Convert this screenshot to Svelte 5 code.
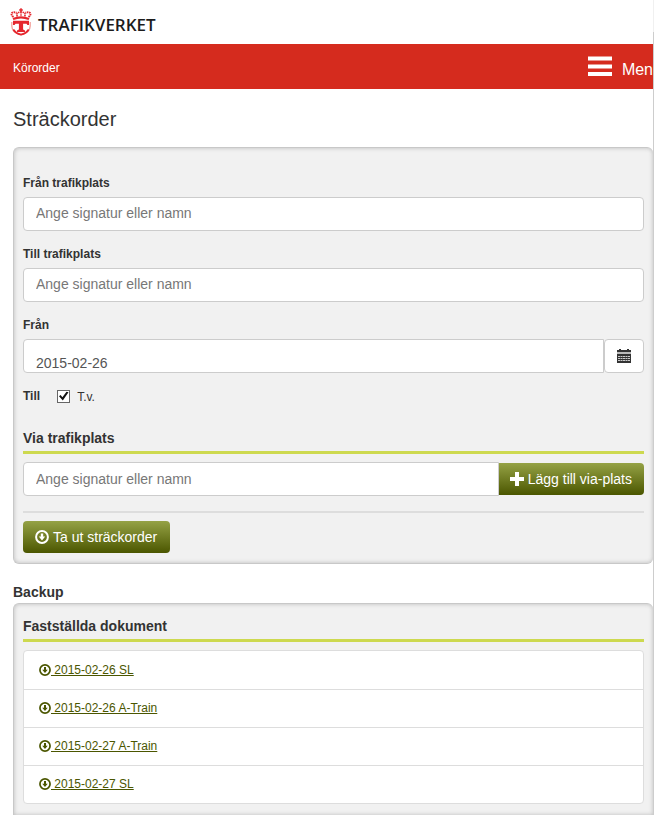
<script>
  let from = $state('');
  let to = $state('');
  let via = $state('');
  let date = $state('2015-02-26');
  let untilFurther = $state(true);
  const documents = ['2015-02-26 SL', '2015-02-26 A-Train', '2015-02-27 A-Train', '2015-02-27 SL'];
</script>

{#snippet download()}
  <svg class="download" viewBox="0 0 14 14" aria-hidden="true">
    <circle cx="7" cy="7" r="5.9" fill="none" stroke="currentColor" stroke-width="2" />
    <path d="M5.800 3.600h2.400v3h2L7 10.400 3.800 6.600h2z" fill="currentColor" />
  </svg>
{/snippet}

<div class="shell">
  <div class="page">
    <header>
      <svg class="crest" viewBox="0 0 22 28" aria-hidden="true">
        <g fill="none" stroke="#e5262d">
          <path d="M3.500 9C-.5 6 2 3 6.500 4.800M18.500 9C22.500 6 20 3 15.500 4.800" stroke-width="1.900" stroke-dasharray="1.600 .6" />
          <path d="M7.500 8.500C5.500 5.500 8 4 11 4s5.500 1.500 3.500 4.500M11 4v4.500" stroke-width="1.500" stroke-dasharray="1.600 .6" />
          <path d="M11 .3v3.400M9.200 1.900h3.600" stroke-width="1.500" />
          <path d="M3 11Q11 7.600 19 11" stroke-width="2.200" />
          <path d="M1.800 14v4c0 4.500 3.700 7.300 9.200 8.700 5.500-1.400 9.200-4.200 9.200-8.700v-4" stroke="#f4a09a" stroke-width="1.300" />
          <path d="M3.300 21.500q2.300 3.800 7.700 5.100 5.400-1.300 7.700-5.100" stroke-width="1.800" />
        </g>
        <path d="M3 12.800h16v4.200h-1.600l-.9-1.200h-3.400v5.800l1.900 1v1.500H7v-1.500l1.900-1v-5.800H5.500l-.9 1.200H3z" fill="#e5262d" />
      </svg>
      <span class="brand">TRAFIKVERKET</span>
    </header>

    <nav>
      <a href="#top">Körorder</a>
      <button type="button" class="menu">
        <svg viewBox="0 0 24 20" aria-hidden="true">
          <path d="M0 2.500h24M0 10.500h24M0 18h24" stroke="#fff" stroke-width="4" />
        </svg>
        <span>Men</span>
      </button>
    </nav>

    <main>
      <h1>Sträckorder</h1>
      <form class="panel" onsubmit={(e) => e.preventDefault()}>
        <label class="caption" for="from">Från trafikplats</label>
        <input class="field" id="from" type="text" placeholder="Ange signatur eller namn" bind:value={from} />

        <label class="caption" for="to">Till trafikplats</label>
        <input class="field" id="to" type="text" placeholder="Ange signatur eller namn" bind:value={to} />

        <label class="caption" for="date">Från</label>
        <div class="group">
          <input class="field date" id="date" type="text" bind:value={date} />
          <button type="button" class="calendar" aria-label="Kalender">
            <svg viewBox="0 0 14 14" aria-hidden="true">
              <path d="M0 1h2V0h2v1h6V0h2v1h2v2H0zM0 5h14v9H0z" fill="#333" />
              <path d="M0 4h14" stroke="#bbb" stroke-width="2" />
              <path d="M1 7.500h12M1 9.500h12M1 11.500h12" stroke="#ccc" stroke-dasharray="2 .5" />
            </svg>
          </button>
        </div>

        <div class="until">
          <span class="till">Till</span>
          <label>
            <span class="box">
              <input type="checkbox" bind:checked={untilFurther} />
              <svg viewBox="0 0 13 13" aria-hidden="true">
                <path d="M2 6.200 3.600 5 5.400 7.200 9.500 1.800 11.500 2.300 5.800 10.600z" fill="#111" />
              </svg>
            </span>
            <span>T.v.</span>
          </label>
        </div>

        <h2><label for="via">Via trafikplats</label></h2>
        <div class="group">
          <input class="field" id="via" type="text" placeholder="Ange signatur eller namn" bind:value={via} />
          <button type="button" class="green add">
            <svg class="plus" viewBox="0 0 14 14" aria-hidden="true">
              <path d="M5 0h4v5h5v4H9v5H5V9H0V5h5z" fill="#fff" />
            </svg>
            Lägg till via-plats
          </button>
        </div>
        <hr />
        <button type="submit" class="green">{@render download()} Ta ut sträckorder</button>
      </form>

      <h3>Backup</h3>
      <section class="panel backup">
        <h2>Fastställda dokument</h2>
        <ul>
          {#each documents as name}
            <li><a href="#document">{@render download()}<span>&nbsp;{name}</span></a></li>
          {/each}
        </ul>
      </section>
    </main>
  </div>
  <div class="track"></div>
</div>

<style>
  .shell,
  .shell * {
    box-sizing: border-box;
  }
  .shell {
    display: grid;
    grid-template-columns: 1fr 1px;
    height: 100vh;
    overflow: hidden;
    background: #fff;
    color: #333;
    font: 12px/20px 'Liberation Sans', Arial, sans-serif;
  }
  .page {
    display: flex;
    flex-direction: column;
    min-width: 0;
    min-height: 100vh;
  }
  .track {
    border-top: 32px solid #f0f0f0;
    background: #cdcdcd;
  }
  header {
    display: flex;
    align-items: center;
    gap: 6px;
    height: 44px;
    padding: 0 10px;
  }
  .crest {
    width: 22px;
    height: 28px;
  }
  .brand {
    padding-top: 6px;
    color: #1c1c1c;
    font: 600 17px/20px 'Open Sans', 'Noto Sans', sans-serif;
  }
  nav {
    display: flex;
    align-items: center;
    justify-content: space-between;
    height: 45px;
    padding-left: 13px;
    background: #d52b1e;
  }
  nav a {
    padding-top: 3px;
    color: #fff;
    text-decoration: none;
  }
  button,
  input {
    font: 14px/20px 'Liberation Sans', Arial, sans-serif;
  }
  button {
    cursor: pointer;
  }
  .menu {
    display: flex;
    gap: 10px;
    padding: 2px 0 0;
    border: 0;
    background: none;
    color: #fff;
    font-size: 16px;
  }
  .menu svg {
    width: 24px;
    height: 20px;
  }
  .menu span {
    padding-top: 4px;
  }
  main {
    display: flex;
    flex: 1;
    flex-direction: column;
    padding-left: 13px;
  }
  h1 {
    margin: 18px 0 16px;
    font-size: 20px;
    font-weight: 400;
    line-height: 24px;
  }
  .panel {
    padding: 26px 9px 10px;
    border: 1px solid #c8c8c8;
    border-right-width: 0;
    border-radius: 6px;
    background: #f1f1f1;
    box-shadow: inset 0 0 4px #bbb;
  }
  .caption {
    display: block;
    font-weight: 700;
    line-height: 18px;
    margin-bottom: 5px;
  }
  .field {
    display: block;
    width: 100%;
    min-width: 0;
    height: 34px;
    margin: 0 0 14px;
    padding: 5px 12px 7px;
    border: 1px solid #ccc;
    border-radius: 4px;
    outline: none;
    background: #fff;
    color: #555;
  }
  .field::placeholder {
    color: #777;
    opacity: 1;
  }
  .group {
    display: flex;
    align-items: center;
  }
  .group .field {
    flex: 1;
    margin: 0;
    padding: 6px 12px;
    border-radius: 4px 0 0 4px;
  }
  .group .date {
    padding: 13px 12px 0;
  }
  .calendar {
    width: 40px;
    height: 34px;
    padding: 0;
    border: 1px solid #ccc;
    border-radius: 4px;
    background: #fff;
  }
  .calendar svg {
    display: block;
    width: 14px;
    height: 14px;
    margin: 0 auto;
  }
  .until {
    display: flex;
    align-items: center;
    gap: 17px;
    margin: 12px 0 21px;
  }
  .till {
    font-weight: 700;
  }
  .until label {
    display: flex;
    align-items: center;
    gap: 7px;
  }
  .until label > span:last-child {
    padding-top: 2px;
  }
  .box {
    display: grid;
    width: 13px;
    height: 13px;
  }
  .box > * {
    grid-area: 1 / 1;
    width: 13px;
    height: 13px;
  }
  .box input {
    margin: 0;
    appearance: none;
    border: 1px solid #666;
    background: #fff;
  }
  .box svg {
    pointer-events: none;
    visibility: hidden;
  }
  .box input:checked + svg {
    visibility: visible;
  }
  h2 {
    margin: 0 0 8px;
    padding-bottom: 3px;
    border-bottom: 3px solid #cdd94f;
    font-size: 14px;
    line-height: 20px;
  }
  .green {
    display: flex;
    align-items: center;
    gap: 4px;
    height: 32px;
    padding: 0 13px 0 12px;
    border: 0;
    border-radius: 4px;
    background: linear-gradient(#95a245, #4b5600);
    color: #fff;
  }
  .green.add {
    padding: 0 12px 0 11px;
    border-radius: 0 4px 4px 0;
  }
  .plus,
  .download {
    width: 14px;
    height: 14px;
  }
  hr {
    height: 2px;
    margin: 15px 0 8px;
    border: 0;
    background: #ddd;
  }
  h3 {
    margin: 18px 0 1px;
    font-size: 14px;
    line-height: 20px;
  }
  .backup {
    flex: 1;
    padding-top: 12px;
    border-bottom: 0;
    border-radius: 6px 6px 0 0;
  }
  ul {
    margin: 0;
    padding: 0;
    overflow: hidden;
    border: 1px solid #ddd;
    border-radius: 4px;
    background: #fff;
    list-style: none;
  }
  li {
    height: 38px;
    padding: 9px 15px;
  }
  li + li {
    padding-top: 8px;
    border-top: 1px solid #ddd;
  }
  li a {
    display: inline-flex;
    align-items: center;
    color: #4b5600;
    text-decoration: none;
  }
  li a span {
    text-decoration: underline;
  }
  li .download {
    width: 12px;
    height: 12px;
  }
</style>
